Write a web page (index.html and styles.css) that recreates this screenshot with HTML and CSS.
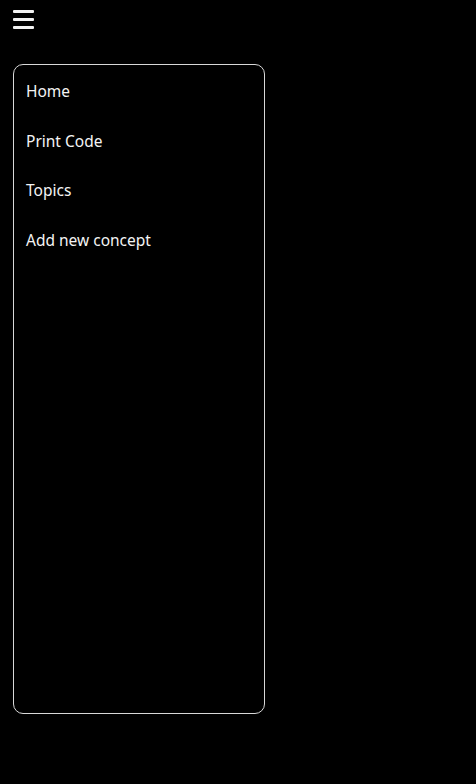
FILE: index.html
```html
<!DOCTYPE html>
<html>
<head>
<meta charset="utf-8">
<link rel="stylesheet" href="styles.css">
</head>
<body>
<div class="page">
  <button class="burger" aria-label="Menu">
    <span class="bar"></span><span class="bar"></span><span class="bar"></span>
  </button>
  <nav class="drawer">
    <a class="item" href="#">Home</a>
    <a class="item" href="#">Print Code</a>
    <a class="item" href="#">Topics</a>
    <a class="item" href="#">Add new concept</a>
  </nav>
</div>
</body>
</html>
```
FILE: styles.css
```css
html, body {
  margin: 0;
  padding: 0;
  background: #000;
  color: #fff;
  font-family: "Noto Sans", "Open Sans", sans-serif;
}
.page {
  padding: 9px 0 0 13px;
  display: flex;
  flex-direction: column;
  align-items: flex-start;
}
.burger {
  background: none;
  border: 0;
  padding: 1px 0 0 0;
  display: flex;
  flex-direction: column;
  gap: 5px;
  width: 21px;
  cursor: pointer;
}
.bar {
  display: block;
  width: 21px;
  height: 3px;
  background: #f2f2f2;
  border-radius: 1px;
}
.drawer {
  margin-top: 35px;
  width: 250px;
  height: 646px;
  border: 1px solid #d8d8d8;
  border-radius: 10px;
  padding-top: 2px;
  display: flex;
  flex-direction: column;
  box-sizing: content-box;
}
.item {
  display: block;
  height: 49.5px;
  line-height: 49.5px;
  padding-left: 12px;
  color: #f4f4f4;
  text-decoration: none;
  font-size: 15.5px;
}
```
